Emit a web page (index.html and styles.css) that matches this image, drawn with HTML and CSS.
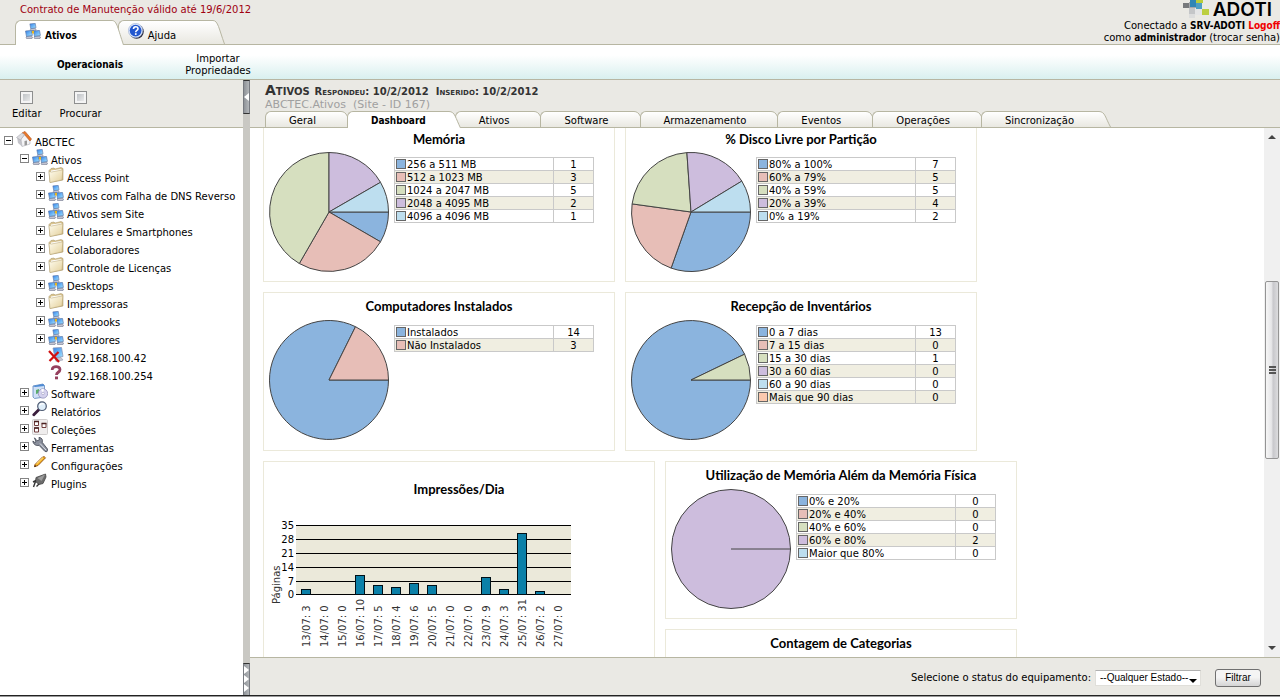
FILE: index.html
```html
<!DOCTYPE html>
<html lang="pt-BR">
<head>
<meta charset="utf-8">
<title>Ativos - Dashboard</title>
<link rel="stylesheet" href="styles.css">
</head>
<body>
<svg class="defs" aria-hidden="true">
  <defs>
    <linearGradient id="tabFill" x1="0" y1="0" x2="0" y2="1"><stop offset="0" stop-color="#ffffff"/><stop offset="1" stop-color="#e9e8e1"/></linearGradient>
    <linearGradient id="screen" x1="0" y1="0" x2="1" y2="1"><stop offset="0" stop-color="#2f7fea"/><stop offset="1" stop-color="#a8e8ff"/></linearGradient>
    <linearGradient id="folderFill" x1="0" y1="0" x2="1" y2="1"><stop offset="0" stop-color="#fffdf0"/><stop offset="1" stop-color="#e3cf9a"/></linearGradient>
    <symbol id="capS" viewBox="0 0 12 16"><path d="M0 .5C6 .5 6.500 7 11.500 16H0z" fill="url(#tabFill)"/><path d="M0 .5C6 .5 6.500 7 11.500 16" fill="none" stroke="#b7b6a2"/></symbol>
    <symbol id="capSOn" viewBox="0 0 12 17"><path d="M0 .5C6 .5 6.500 7 11.500 17H0z" fill="#fff"/><path d="M0 .5C6 .5 6.500 7 11.500 17" fill="none" stroke="#b7b6a2"/></symbol>
    <symbol id="capL" viewBox="0 0 12 24"><path d="M0 .5C5 .5 6 9 11.500 24H0z" fill="url(#tabFill)"/><path d="M0 .5C5 .5 6 9 11.500 24" fill="none" stroke="#b7b6a2"/></symbol>
    <symbol id="capLOn" viewBox="0 0 12 25"><path d="M0 .5C5 .5 6 9 11.500 25H0z" fill="#fff"/><path d="M0 .5C5 .5 6 9 11.500 25" fill="none" stroke="#b7b6a2"/></symbol>
    <symbol id="pc" viewBox="0 0 8 9"><path d="M1 7l1-1h4l1.500 1-.5 1.500H1.500z" fill="#c3c5d2" stroke="#74788f" stroke-width=".6"/><path d="M.5 1L6.500.4l.9 5L1.500 6.500z" fill="url(#screen)" stroke="#5d78a8" stroke-width=".7"/></symbol>
    <symbol id="net" viewBox="0 0 16 16"><path d="M8 6v4M8 9l-4 1M8 9l5 1" stroke="#3a3a30" stroke-width="1.500"/><use href="#pc" x="4" y="0" width="8" height="8"/><use href="#pc" x="0" y="7" width="8" height="9"/><use href="#pc" x="8" y="7" width="8" height="9"/><rect x="7" y="8" width="2" height="2.500" fill="#e8b820"/></symbol>
    <symbol id="folder" viewBox="0 0 16 16"><path d="M1 3.500L3 1.500l3-.5 1 1 6-1.500 2 1V13L2 15.500z" fill="#d9c48f" stroke="#a08c5c" stroke-width=".5"/><path d="M3 3.500L13.500 2v10.500L2 15z" fill="#fff" /><path d="M1 4.500L3.500 5 14.800 2.800 14 12.800 2 15.500z" fill="url(#folderFill)" stroke="#b5a071" stroke-width=".5"/></symbol>
    <symbol id="home" viewBox="0 0 16 16"><path d="M1 6l4 1 1 8.500L2 12z" fill="#c4c4ca"/><path d="M5 8l4-5 5 5v5l-8 2.500z" fill="#f4f4f6" stroke="#9c9ca4" stroke-width=".5"/><path d="M8.500 10l2.500-.6V14l-2.500.6z" fill="#999"/><path d="M6 2L9 .4 15.500 8l-1.500 2L8.500 3.600z" fill="#e8782a" stroke="#b24d16" stroke-width=".6"/><path d="M.5 6.500L6 2l2.500 1.600L4.500 9z" fill="#dcdce0" stroke="#9c9ca4" stroke-width=".5"/></symbol>
    <symbol id="off" viewBox="0 0 16 16"><path d="M5 1l8.500-.5 1.500 9-8 1.500z" fill="url(#screen)" stroke="#8a98b8" stroke-width=".8"/><path d="M7 11l6-.5 2 2.500-7 1.500z" fill="#c4c7d2" stroke="#8c90a4" stroke-width=".5"/><path d="M1 4l10 11M10.500 5L1.500 14" stroke="#d01010" stroke-width="2.200"/></symbol>
    <symbol id="unknown" viewBox="0 0 16 16"><path d="M4.200 5C4 .5 12 .5 12 4.500 12 7.500 8.500 7 8.500 10" fill="none" stroke="#96405e" stroke-width="2.800"/><rect x="7" y="11.500" width="3" height="2.800" fill="#96405e"/></symbol>
    <symbol id="soft" viewBox="0 0 16 16"><path d="M1 3l10-2 1.500 1.500V14l-10 1.500L1 14z" fill="#cfe0f6" stroke="#5f87bd" stroke-width=".8"/><path d="M1 3l10-2 1.500 2-9.500 1z" fill="#4c8ad4"/><path d="M4 7l3-1v4l-3 1z" fill="#5aac6a"/><circle cx="11" cy="10.500" r="4.700" fill="#d5d2ee" stroke="#8a88b4" stroke-width=".7"/><path d="M11 10.500L9 6.500a4.500 4.500 0 0 1 3-.3z" fill="#fff"/><circle cx="11" cy="10.500" r="1.300" fill="#fff" stroke="#8a88b4" stroke-width=".5"/></symbol>
    <symbol id="lens" viewBox="0 0 16 16"><path d="M6.500 9L1.800 13.800" stroke="#3a1d3c" stroke-width="2.800" stroke-linecap="round"/><circle cx="10" cy="5.200" r="4.300" fill="#dfeefa" stroke="#4d5a72" stroke-width="1.200"/><path d="M7.500 4.500Q9 2 12 3" fill="none" stroke="#fff" stroke-width="1.200"/></symbol>
    <symbol id="coll" viewBox="0 0 16 16"><rect x=".5" y=".5" width="15" height="15" rx="1" fill="#efeded" stroke="#cfcccc"/><path d="M2.500 2.500h4v4h-4zM2.500 9h4v4h-4zM10 4.500h4v4h-4z" fill="#fff" stroke="#703c3c"/><path d="M2 2.500h5M2 9h5M9.500 4.500h5" stroke="#4a2020" stroke-width="1.300"/></symbol>
    <symbol id="wrench" viewBox="0 0 16 16"><path d="M2.500.8l2.500 3 2.300-.8L7 .3c3 .4 4 2.700 3.200 5L15.500 12c1 2-1 3.500-2.700 2.300L7 8.300C4 9.300 1 7 .9 4l2 1.500L4 5z" fill="#8a8f9c" stroke="#3f4450" stroke-width=".8"/><path d="M8 6.500l6 6.500" stroke="#dfe2ea" stroke-width="1"/></symbol>
    <symbol id="pencil" viewBox="0 0 16 16"><path d="M3 9.500L10.500 2q2-1 3 .8L6 10.500l-3.500 1.200z" fill="#f8b523" stroke="#8c4a10" stroke-width=".9"/><path d="M4.500 8.800L11 2.500" stroke="#ffe9a0" stroke-width="1"/><path d="M2.200 12l.8-2 1.200 1.300z" fill="#301808"/></symbol>
    <symbol id="plug" viewBox="0 0 16 16"><path d="M13.500 1L4 4.500l-.5 4 3.500 3 4-1L14 4z" fill="#6c6c6c" stroke="#444" stroke-width=".8"/><path d="M13 1.500L5.500 5l4 3z" fill="#9c9c9c"/><path d="M4 7.500L1 9M7 11l-2.500 2.500M3.500 8.500L1.500 14" stroke="#333" stroke-width="1.400"/></symbol>
    <symbol id="help" viewBox="0 0 16 16"><circle cx="8.600" cy="8.600" r="7.200" fill="#2a2a3a"/><circle cx="7.600" cy="7.600" r="7.200" fill="#dce7fb" stroke="#8aa0cc" stroke-width=".5"/><circle cx="7.600" cy="7.600" r="5.900" fill="#2257cf"/><path d="M5.500 6C5.500 3 10 3 10 5.700 10 7.500 7.700 7.300 7.700 9.200" fill="none" stroke="#fff" stroke-width="1.600"/><rect x="6.900" y="10.200" width="1.700" height="1.700" fill="#fff"/></symbol>
  </defs>
</svg>

<header class="top">
  <div class="top-left">
    <p class="contract">Contrato de Manutenção válido até 19/6/2012</p>
    <nav class="tabs tabs-main">
      <a class="tab tab-on" href="#"><span class="tab-body"><svg class="ico"><use href="#net"/></svg>Ativos</span><svg class="cap"><use href="#capLOn"/></svg></a>
      <a class="tab tab-help" href="#"><span class="tab-body"><svg class="ico"><use href="#help"/></svg>Ajuda</span><svg class="cap"><use href="#capL"/></svg></a>
    </nav>
  </div>
  <div class="top-right">
    <div class="logo">
      <svg class="logo-mark" viewBox="0 0 26 18"><rect x="0" y="3" width="6" height="5" fill="#77797c"/><rect x="6" y="2" width="7" height="6" fill="#a4a7aa"/><rect x="6" y="8" width="6" height="6" fill="#c4c6c8"/><rect x="7" y="0" width="7" height="7" fill="#2f86b5"/><rect x="13" y="0" width="7" height="3" fill="#b8cd3a"/><rect x="13" y="3" width="6" height="6" fill="#4c9fc4"/><rect x="12" y="9" width="7" height="6" fill="#e4e5e6"/><rect x="19" y="9" width="7" height="6" fill="#bccf40"/><rect x="6" y="14" width="6" height="4" fill="#dcdddd"/></svg>
      <span>ADOTI</span>
    </div>
    <p class="who">Conectado a <b>SRV-ADOTI</b> <a class="logoff" href="#">Logoff</a><br>como <b>administrador</b> (<a href="#">trocar senha</a>)</p>
  </div>
</header>

<nav class="subnav">
  <a class="cur" href="#">Operacionais</a>
  <a href="#">Importar Propriedades</a>
</nav>

<div class="work">
  <aside class="side">
    <div class="side-tools">
      <label><input type="checkbox">Editar</label>
      <label><input type="checkbox">Procurar</label>
    </div>
    <ul class="tree">
      <li class="l0"><button class="minus" aria-label="Recolher"></button><svg class="ico"><use href="#home"/></svg><a href="#">ABCTEC</a></li>
      <li class="l1"><button class="minus" aria-label="Recolher"></button><svg class="ico"><use href="#net"/></svg><a href="#">Ativos</a></li>
      <li class="l2"><button class="plus" aria-label="Expandir"></button><svg class="ico"><use href="#folder"/></svg><a href="#">Access Point</a></li>
      <li class="l2"><button class="plus" aria-label="Expandir"></button><svg class="ico"><use href="#net"/></svg><a href="#">Ativos com Falha de DNS Reverso</a></li>
      <li class="l2"><button class="plus" aria-label="Expandir"></button><svg class="ico"><use href="#net"/></svg><a href="#">Ativos sem Site</a></li>
      <li class="l2"><button class="plus" aria-label="Expandir"></button><svg class="ico"><use href="#folder"/></svg><a href="#">Celulares e Smartphones</a></li>
      <li class="l2"><button class="plus" aria-label="Expandir"></button><svg class="ico"><use href="#folder"/></svg><a href="#">Colaboradores</a></li>
      <li class="l2"><button class="plus" aria-label="Expandir"></button><svg class="ico"><use href="#folder"/></svg><a href="#">Controle de Licenças</a></li>
      <li class="l2"><button class="plus" aria-label="Expandir"></button><svg class="ico"><use href="#net"/></svg><a href="#">Desktops</a></li>
      <li class="l2"><button class="plus" aria-label="Expandir"></button><svg class="ico"><use href="#folder"/></svg><a href="#">Impressoras</a></li>
      <li class="l2"><button class="plus" aria-label="Expandir"></button><svg class="ico"><use href="#net"/></svg><a href="#">Notebooks</a></li>
      <li class="l2"><button class="plus" aria-label="Expandir"></button><svg class="ico"><use href="#net"/></svg><a href="#">Servidores</a></li>
      <li class="leaf"><svg class="ico"><use href="#off"/></svg><a href="#">192.168.100.42</a></li>
      <li class="leaf"><svg class="ico"><use href="#unknown"/></svg><a href="#">192.168.100.254</a></li>
      <li class="l1"><button class="plus" aria-label="Expandir"></button><svg class="ico"><use href="#soft"/></svg><a href="#">Software</a></li>
      <li class="l1"><button class="plus" aria-label="Expandir"></button><svg class="ico"><use href="#lens"/></svg><a href="#">Relatórios</a></li>
      <li class="l1"><button class="plus" aria-label="Expandir"></button><svg class="ico"><use href="#coll"/></svg><a href="#">Coleções</a></li>
      <li class="l1"><button class="plus" aria-label="Expandir"></button><svg class="ico"><use href="#wrench"/></svg><a href="#">Ferramentas</a></li>
      <li class="l1"><button class="plus" aria-label="Expandir"></button><svg class="ico"><use href="#pencil"/></svg><a href="#">Configurações</a></li>
      <li class="l1"><button class="plus" aria-label="Expandir"></button><svg class="ico"><use href="#plug"/></svg><a href="#">Plugins</a></li>
    </ul>
  </aside>

  <div class="split">
    <button class="split-btn" aria-label="Ocultar painel"><svg width="5" height="8" viewBox="0 0 5 8"><path d="M5 0v8L0 4z" fill="#fff"/></svg></button>
    <button class="split-btn split-end" aria-label="Mostrar painel"><svg width="5" height="27" viewBox="0 0 5 27"><path d="M0 0v8l5-4zM0 9v8l5-4zM0 18v8l5-4z" fill="#fff"/></svg></button>
  </div>

  <main class="content">
    <div class="head">
      <h1>Ativos <small>Respondeu: 10/2/2012&nbsp; Inserido: 10/2/2012</small></h1>
      <p class="path">ABCTEC.Ativos &nbsp;(Site - ID 167)</p>
      <nav class="tabs tabs-sub">
        <a class="tab" href="#"><span class="tab-body">Geral</span><svg class="cap"><use href="#capS"/></svg></a>
        <a class="tab tab-on" href="#"><span class="tab-body">Dashboard</span><svg class="cap"><use href="#capSOn"/></svg></a>
        <a class="tab" href="#"><span class="tab-body">Ativos</span><svg class="cap"><use href="#capS"/></svg></a>
        <a class="tab" href="#"><span class="tab-body">Software</span><svg class="cap"><use href="#capS"/></svg></a>
        <a class="tab" href="#"><span class="tab-body">Armazenamento</span><svg class="cap"><use href="#capS"/></svg></a>
        <a class="tab" href="#"><span class="tab-body">Eventos</span><svg class="cap"><use href="#capS"/></svg></a>
        <a class="tab" href="#"><span class="tab-body">Operações</span><svg class="cap"><use href="#capS"/></svg></a>
        <a class="tab" href="#"><span class="tab-body">Sincronização</span><svg class="cap"><use href="#capS"/></svg></a>
      </nav>
    </div>

    <div class="pane">
      <div class="board">
        <div class="row row-first">
          <section class="card">
            <h2>Memória</h2>
            <div class="card-body">
              <svg class="pie" viewBox="0 0 120 120"><path class="c1" d="M60 60H119.500A59.500 59.500 0 0 1 111.500 89.800z"/><path class="c2" d="M60 60L111.500 89.800A59.500 59.500 0 0 1 30.300 111.500z"/><path class="c3" d="M60 60L30.300 111.500A59.500 59.500 0 0 1 60 .5z"/><path class="c4" d="M60 60V.5A59.500 59.500 0 0 1 111.500 30.300z"/><path class="c5" d="M60 60L111.500 30.300A59.500 59.500 0 0 1 119.500 60z"/></svg>
              <table class="legend">
                <tr><td><i class="c1"></i>256 a 511 MB</td><td>1</td></tr>
                <tr><td><i class="c2"></i>512 a 1023 MB</td><td>3</td></tr>
                <tr><td><i class="c3"></i>1024 a 2047 MB</td><td>5</td></tr>
                <tr><td><i class="c4"></i>2048 a 4095 MB</td><td>2</td></tr>
                <tr><td><i class="c5"></i>4096 a 4096 MB</td><td>1</td></tr>
              </table>
            </div>
          </section>
          <section class="card">
            <h2>% Disco Livre por Partição</h2>
            <div class="card-body">
              <svg class="pie" viewBox="0 0 120 120"><path class="c1" d="M60 60H119.500A59.500 59.500 0 0 1 40.100 116.100z"/><path class="c2" d="M60 60L40.100 116.100A59.500 59.500 0 0 1 1.100 51.900z"/><path class="c3" d="M60 60L1.100 51.900A59.500 59.500 0 0 1 55.900 .6z"/><path class="c4" d="M60 60L55.900 .6A59.500 59.500 0 0 1 110.800 29.100z"/><path class="c5" d="M60 60L110.800 29.100A59.500 59.500 0 0 1 119.500 60z"/></svg>
              <table class="legend">
                <tr><td><i class="c1"></i>80% a 100%</td><td>7</td></tr>
                <tr><td><i class="c2"></i>60% a 79%</td><td>5</td></tr>
                <tr><td><i class="c3"></i>40% a 59%</td><td>5</td></tr>
                <tr><td><i class="c4"></i>20% a 39%</td><td>4</td></tr>
                <tr><td><i class="c5"></i>0% a 19%</td><td>2</td></tr>
              </table>
            </div>
          </section>
        </div>

        <div class="row">
          <section class="card">
            <h2>Computadores Instalados</h2>
            <div class="card-body">
              <svg class="pie" viewBox="0 0 120 120"><path class="c1" d="M60 60H119.500A59.500 59.500 0 1 1 86.500 6.700z"/><path class="c2" d="M60 60L86.500 6.700A59.500 59.500 0 0 1 119.500 60z"/></svg>
              <table class="legend">
                <tr><td><i class="c1"></i>Instalados</td><td>14</td></tr>
                <tr><td><i class="c2"></i>Não Instalados</td><td>3</td></tr>
              </table>
            </div>
          </section>
          <section class="card">
            <h2>Recepção de Inventários</h2>
            <div class="card-body">
              <svg class="pie" viewBox="0 0 120 120"><path class="c1" d="M60 60H119.500A59.500 59.500 0 1 1 113.600 34.200z"/><path class="c3" d="M60 60L113.600 34.200A59.500 59.500 0 0 1 119.500 60z"/></svg>
              <table class="legend">
                <tr><td><i class="c1"></i>0 a 7 dias</td><td>13</td></tr>
                <tr><td><i class="c2"></i>7 a 15 dias</td><td>0</td></tr>
                <tr><td><i class="c3"></i>15 a 30 dias</td><td>1</td></tr>
                <tr><td><i class="c4"></i>30 a 60 dias</td><td>0</td></tr>
                <tr><td><i class="c5"></i>60 a 90 dias</td><td>0</td></tr>
                <tr><td><i class="c6"></i>Mais que 90 dias</td><td>0</td></tr>
              </table>
            </div>
          </section>
        </div>

        <div class="row">
          <section class="card card-bars">
            <h2>Impressões/Dia</h2>
            <svg class="bars" width="310" height="144" viewBox="0 0 310 144">
              <rect x="27" y="12" width="275" height="70" fill="#ebe9da"/>
              <path d="M27 12.500h275M27 26.500h275M27 40.500h275M27 54.500h275M27 68.500h275M27 81.500h275" stroke="#000"/>
              <g fill="#0b80a8" stroke="#001018"><rect x="32.500" y="76.500" width="9" height="5"/><rect x="86.500" y="62.500" width="9" height="19"/><rect x="104.500" y="72.500" width="9" height="9"/><rect x="122.500" y="74.500" width="9" height="7"/><rect x="140.500" y="70.500" width="9" height="11"/><rect x="158.500" y="72.500" width="9" height="9"/><rect x="212.500" y="64.500" width="9" height="17"/><rect x="230.500" y="76.500" width="9" height="5"/><rect x="248.500" y="20.500" width="9" height="61"/><rect x="266.500" y="78.500" width="9" height="3"/></g>
              <g text-anchor="end"><text x="25" y="16">35</text><text x="25" y="30">28</text><text x="25" y="44">21</text><text x="25" y="58">14</text><text x="25" y="72">7</text><text x="25" y="85">0</text></g>
              <g class="vert">
                <text transform="translate(11 91) rotate(-90)">Páginas</text>
                <text transform="translate(41 134) rotate(-90)">13/07: 3</text>
                <text transform="translate(59 134) rotate(-90)">14/07: 0</text>
                <text transform="translate(77 134) rotate(-90)">15/07: 0</text>
                <text transform="translate(95 134) rotate(-90)">16/07: 10</text>
                <text transform="translate(113 134) rotate(-90)">17/07: 5</text>
                <text transform="translate(131 134) rotate(-90)">18/07: 4</text>
                <text transform="translate(149 134) rotate(-90)">19/07: 6</text>
                <text transform="translate(167 134) rotate(-90)">20/07: 5</text>
                <text transform="translate(185 134) rotate(-90)">21/07: 0</text>
                <text transform="translate(203 134) rotate(-90)">22/07: 0</text>
                <text transform="translate(221 134) rotate(-90)">23/07: 9</text>
                <text transform="translate(239 134) rotate(-90)">24/07: 3</text>
                <text transform="translate(257 134) rotate(-90)">25/07: 31</text>
                <text transform="translate(275 134) rotate(-90)">26/07: 2</text>
                <text transform="translate(293 134) rotate(-90)">27/07: 0</text>
              </g>
            </svg>
          </section>
          <div class="stack">
            <section class="card">
              <h2>Utilização de Memória Além da Memória Física</h2>
              <div class="card-body">
                <svg class="pie" viewBox="0 0 120 120"><circle class="c4" cx="60" cy="60" r="59.500"/><path d="M60 60H119.500"/></svg>
                <table class="legend">
                  <tr><td><i class="c1"></i>0% e 20%</td><td>0</td></tr>
                  <tr><td><i class="c2"></i>20% e 40%</td><td>0</td></tr>
                  <tr><td><i class="c3"></i>40% e 60%</td><td>0</td></tr>
                  <tr><td><i class="c4"></i>60% e 80%</td><td>2</td></tr>
                  <tr><td><i class="c5"></i>Maior que 80%</td><td>0</td></tr>
                </table>
              </div>
            </section>
            <section class="card"><h2>Contagem de Categorias</h2></section>
          </div>
        </div>
      </div>
      <div class="scroll" aria-hidden="true">
        <svg width="8" height="4" viewBox="0 0 8 4"><path d="M0 4h8L4 0z" fill="#444"/></svg>
        <div class="track"><div class="thumb"><i></i><i></i><i></i></div></div>
        <svg width="8" height="4" viewBox="0 0 8 4"><path d="M0 0h8L4 4z" fill="#444"/></svg>
      </div>
    </div>

    <form class="filter">
      <label for="status">Selecione o status do equipamento:</label>
      <span class="pick"><select id="status"><option>--Qualquer Estado--</option></select><svg width="8" height="4" viewBox="0 0 8 4"><path d="M0 0h8L4 4z" fill="#000"/></svg></span>
      <button type="button" class="go">Filtrar</button>
    </form>
  </main>
</div>
</body>
</html>
```

FILE: styles.css
```css
* { box-sizing: border-box; }
body {
  margin: 0;
  height: 100vh;
  display: flex;
  flex-direction: column;
  overflow: hidden;
  background: #fff;
  color: #000;
  font: 10px/12px "DejaVu Sans", Verdana, sans-serif;
  border-bottom: 1px solid #9a9a9a;
}
p, h1, h2, ul { margin: 0; padding: 0; }
a { color: inherit; text-decoration: none; }
button { padding: 0; font: inherit; }
.defs { position: absolute; width: 0; height: 0; }
.ico { width: 16px; height: 16px; flex: none; }
b, .logoff, .tab-on, .subnav .cur {
  font-family: "DejaVu Sans Condensed", "DejaVu Sans", Verdana, sans-serif;
  font-weight: bold;
}

.top {
  display: flex;
  justify-content: space-between;
  height: 45px;
  flex: none;
  background: #eae9e4;
  border-bottom: 1px solid #b7b6a2;
}
.top-left { display: flex; flex-direction: column; justify-content: space-between; }
.contract { padding: 4px 0 0 20px; color: #a00010; }

.tabs { display: flex; margin-bottom: -1px; }
.tab { display: flex; position: relative; margin-right: -6px; white-space: nowrap; }
.tab-body {
  display: flex;
  border: 1px solid #b7b6a2;
  border-width: 1px 0 0 1px;
  border-radius: 6px 0 0 0;
  background: linear-gradient(#fff, #e9e8e1);
}
.tab-on { z-index: 1; }
.tab-on .tab-body { background: #fff; }
.tab:not(.tab-on) { border-bottom: 1px solid #b7b6a2; }
.cap { width: 12px; flex: none; }
.tabs-main { padding-left: 15px; }
.tabs-main .tab { height: 25px; }
.tabs-main .tab-body { gap: 4px; padding: 2px 35px 0 9px; line-height: 26px; }
.tabs-main .tab-help .tab-body { padding-right: 37px; }

.top-right { text-align: right; }
.logo { display: flex; justify-content: flex-end; gap: 4px; height: 20px; padding-right: 8px; }
.logo-mark { width: 26px; height: 18px; }
.logo span { font: 600 19px/20px Inter, sans-serif; }
.who { white-space: nowrap; }
.logoff { color: #f00000; }

.subnav {
  display: flex;
  align-items: center;
  flex: none;
  height: 35px;
  padding: 6px 0 0 26px;
  background: linear-gradient(#fff 30%, #d9f0ef);
  border-bottom: 1px solid #b7b6a2;
}
.subnav a { width: 128px; padding: 0 24px; text-align: center; }

.work { display: flex; flex: 1; min-height: 0; border-bottom: 1px solid #222; }
.side { width: 243px; flex: none; white-space: nowrap; }
.side-tools {
  display: flex;
  gap: 18px;
  height: 48px;
  padding: 11px 12px 0;
  background: #eae9e4;
  border-bottom: 1px solid #b7b6a2;
}
.side-tools label { display: flex; flex-direction: column; align-items: center; gap: 4px; }
.side-tools input {
  appearance: none;
  width: 13px;
  height: 13px;
  margin: 0;
  border: 1px solid #8e8f8f;
  background: linear-gradient(135deg, #b4b8bc, #f4f4f4);
  box-shadow: inset 0 0 0 2px #f4f4f4;
}
.tree { list-style: none; padding-top: 3px; }
.tree li { display: flex; gap: 3px; height: 18px; line-height: 23px; }
.tree .l0 { padding-left: 4px; }
.tree .l1 { padding-left: 20px; }
.tree .l2 { padding-left: 36px; }
.tree .leaf { padding-left: 48px; }
.tree button {
  width: 9px;
  height: 9px;
  margin-top: 5px;
  border: 1px solid #848484;
  background: linear-gradient(#000, #000) center / 5px 1px no-repeat #fff;
}
.tree .plus {
  background: linear-gradient(#000, #000) center / 5px 1px no-repeat, linear-gradient(#000, #000) center / 1px 5px no-repeat #fff;
}

.split { display: flex; flex-direction: column; justify-content: space-between; width: 7px; flex: none; background: #c9c8c3; }
.split-btn {
  display: flex;
  align-items: center;
  justify-content: center;
  width: 7px;
  height: 34px;
  border: 1px solid #777a80;
  border-color: #333 #777a80;
  background: linear-gradient(90deg, #8f9398, #b4b7ba);
}
.split-end { height: 32px; border-bottom: 0; }
.split-btn svg { flex: none; }

.content { display: flex; flex-direction: column; flex: 1; min-width: 0; }
.head {
  display: flex;
  flex-direction: column;
  justify-content: space-between;
  height: 48px;
  flex: none;
  padding: 4px 0 0 15px;
  background: #eae9e4;
  border-bottom: 1px solid #b7b6a2;
}
h1 { font-size: 14px; line-height: 12px; font-variant: small-caps; color: #333; }
h1 small { font-size: 10px; }
.path { color: #a0a0a0; font-size: 11px; line-height: 12px; }
.tabs-sub .tab { height: 17px; }
.tabs-sub .tab-body { padding: 0 25px 0 23px; line-height: 17px; }
.tabs-sub .tab-on .tab-body { padding-right: 23px; }

.pane { display: flex; flex: 1; min-height: 0; overflow: hidden; }
.board { display: flex; flex-direction: column; gap: 10px; flex: 1; min-width: 0; padding-left: 13px; }
.row { display: flex; gap: 10px; flex: none; }
.stack { display: flex; flex-direction: column; gap: 10px; }
.card { width: 352px; min-height: 159px; padding: 0 5px; border: 1px solid #ebe9da; }
.stack .card { min-height: 158px; }
.row-first .card { min-height: 154px; border-top: 0; }
.row-first h2 { line-height: 22px; padding-bottom: 2px; }
.card-bars { width: 392px; height: 327px; }
.card-bars h2 { padding: 14px 0 10px; }
h2 { font: bold 13px/27px Lato, Calibri, sans-serif; text-align: center; white-space: nowrap; }
.card-body { display: flex; gap: 5px; align-items: flex-start; }
.pie { width: 120px; height: 120px; flex: none; stroke: #444; }
.c1 { fill: #8bb4de; background: #8bb4de; }
.c2 { fill: #e7beb7; background: #e7beb7; }
.c3 { fill: #d6dfbf; background: #d6dfbf; }
.c4 { fill: #cdbddd; background: #cdbddd; }
.c5 { fill: #bddeef; background: #bddeef; }
.c6 { fill: #fbc9ae; background: #fbc9ae; }
.legend { width: 200px; margin-top: 5px; border-collapse: collapse; table-layout: fixed; }
.legend td { height: 13px; padding: 1px 0 0; border: 1px solid #c9c9c9; line-height: 11px; white-space: nowrap; }
.legend td:first-child { width: 159px; padding-left: 1px; }
.legend td:last-child { text-align: center; }
.legend tr:nth-child(even) { background: #f0eee1; }
.legend i { display: inline-block; width: 10px; height: 10px; margin-right: 1px; border: 1px solid #666; vertical-align: top; }
.bars { display: block; font-size: 10px; }
.vert { fill: #333; }

.scroll {
  display: flex;
  flex-direction: column;
  align-items: center;
  width: 16px;
  flex: none;
  padding: 7px 0;
  background: #f0f0f0;
}
.track { flex: 1; width: 100%; padding: 142px 1px 0; }
.thumb {
  display: flex;
  flex-direction: column;
  align-items: center;
  justify-content: center;
  gap: 1px;
  height: 178px;
  border: 1px solid #949494;
  border-radius: 2px;
  background: linear-gradient(90deg, #f6f6f6, #e6e6e8 45%, #c8c8cc 60%, #dcdcde);
}
.thumb i { width: 7px; height: 2px; background: #555; }

.filter {
  display: flex;
  align-items: center;
  justify-content: flex-end;
  gap: 4px;
  height: 38px;
  flex: none;
  padding: 3px 19px 0 0;
  background: #eae9e4;
  border-top: 1px solid #b7b6a2;
}
.pick { display: flex; position: relative; margin-right: 10px; }
.pick svg { position: absolute; right: 4px; bottom: 3px; pointer-events: none; }
.pick select {
  appearance: none;
  width: 106px;
  height: 16px;
  padding: 0 4px;
  border: 1px solid #e0dfda;
  border-top-color: #b0b0b0;
  background: #fff;
  color: #000;
  font: 10px/14px "Liberation Sans", Arial, sans-serif;
}
.go {
  width: 46px;
  height: 18px;
  border: 1px solid #707070;
  border-radius: 3px;
  background: linear-gradient(#f4f4f4 45%, #d4d4d4);
  font: 10px/14px "Liberation Sans", Arial, sans-serif;
}
```
